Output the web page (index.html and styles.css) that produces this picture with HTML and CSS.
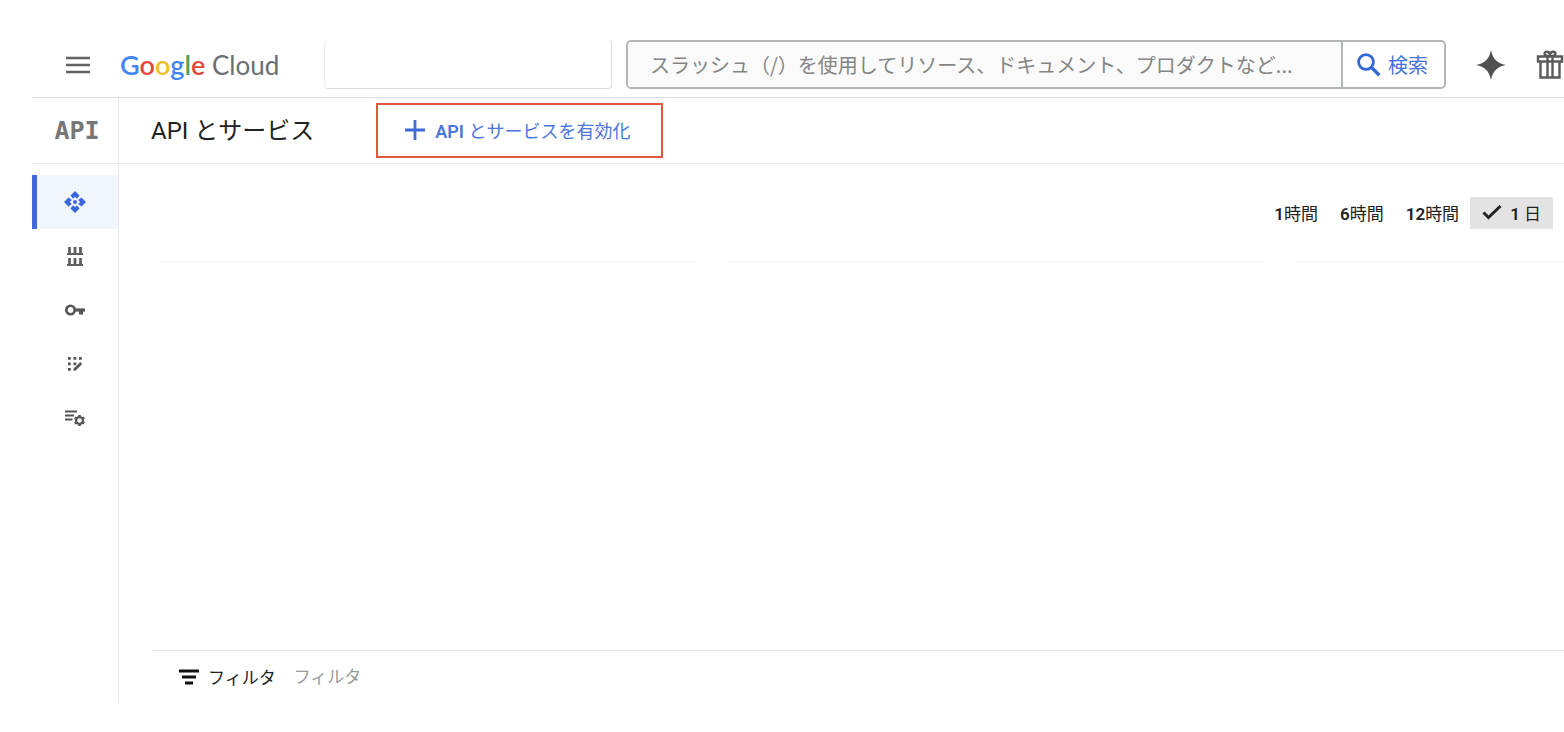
FILE: index.html
```html
<!DOCTYPE html>
<html lang="ja">
<head>
    <meta charset="UTF-8">
    <meta name="viewport" content="width=device-width, initial-scale=1.0">
    <title>API とサービス</title>
    <link rel="stylesheet" href="styles.css">
</head>
<body>
    <header class="top-bar">
        <button class="menu-button" type="button" aria-label="メニュー">
            <svg width="24" height="18" viewBox="0 0 24 18"><path d="M0 2h24M0 9h24M0 16h24" stroke="#626262" stroke-width="2.6"/></svg>
        </button>
        <a class="logo" href="#"><span class="blue">G</span><span class="red">o</span><span class="yellow">o</span><span class="blue">g</span><span class="green">l</span><span class="red">e</span> Cloud</a>
        <button class="project-picker" type="button" aria-label="プロジェクトを選択"></button>
        <form class="search">
            <input class="search-input" type="text" aria-label="検索" placeholder="スラッシュ（/）を使用してリソース、ドキュメント、プロダクトなど...">
            <button class="search-button" type="button">
                <svg width="24" height="24" viewBox="0 0 24 24" fill="none" stroke="#3367d6"><circle cx="9" cy="9" r="7.4" stroke-width="2.8"/><path d="M14.3 14.3l8 8" stroke-width="3.4"/></svg>
                検索
            </button>
        </form>
        <div class="top-actions">
            <button type="button" aria-label="Gemini">
                <svg width="30" height="30" viewBox="0 0 30 30"><path d="M15 0C16.8 9 21 13.2 30 15C21 16.8 16.8 21 15 30C13.2 21 9 16.8 0 15C9 13.2 13.2 9 15 0z" fill="#505050"/></svg>
            </button>
            <button type="button" aria-label="無料トライアル">
                <svg width="28" height="30" viewBox="0 0 28 30" fill="none" stroke="#5a5a5a" stroke-width="2.4"><path d="M2 6.500h24v5H2zM4.500 11.500h19v16h-19zM11.500 6.500v21M16.500 6.500v21M14 6C11 6 8.500 5.500 8.500 3.700C8.500 1 13 1 14 4C15 1 19.500 1 19.500 3.700C19.500 5.500 17 6 14 6z"/></svg>
            </button>
        </div>
    </header>

    <div class="title-bar">
        <div class="product-icon">API</div>
        <h1 class="page-title">API とサービス</h1>
        <button class="enable-button" type="button">
            <svg width="20" height="20" viewBox="0 0 20 20"><path d="M10 0v20M0 10h20" stroke="#3f6bd8" stroke-width="2.8"/></svg>
            <span><b>API</b> とサービスを有効化</span>
        </button>
    </div>

    <div class="layout">
        <nav class="side-nav">
            <a class="active" href="#" aria-label="有効な API とサービス">
                <svg width="22" height="22" viewBox="0 0 22 22" fill="#3b66d8"><circle cx="11" cy="11" r="2"/><path d="M11 0l4.500 4.500-2.500 3.300-2-2-2 2-2.500-3.300zM22 11l-4.500 4.500-3.300-2.500 2-2-2-2 3.300-2.500zM11 22l-4.500-4.500 2.500-3.300 2 2 2-2 2.500 3.300zM0 11l4.500-4.500 3.300 2.500-2 2 2 2-3.300 2.500z"/></svg>
            </a>
            <a href="#" aria-label="ライブラリ">
                <svg width="18" height="20" viewBox="0 0 18 20" fill="none" stroke="#5f5f5f"><path d="M1 8h16M1 19h16" stroke-width="1.800"/><path d="M3.500 1v7M9 1v7M14.500 1v7M3.500 12v7M9 12v7M14.500 12v7" stroke-width="2.800"/></svg>
            </a>
            <a href="#" aria-label="認証情報">
                <svg width="20" height="12" viewBox="0 0 20 12" fill="none" stroke="#555"><circle cx="5.500" cy="6" r="4.200" stroke-width="2.600"/><path d="M9.500 6H20" stroke-width="3.200"/><path d="M16 6v4.500" stroke-width="4"/></svg>
            </a>
            <a href="#" aria-label="OAuth 同意画面">
                <svg width="16" height="16" viewBox="0 0 16 16" fill="#555"><path d="M1 1h2.800v2.800H1zM6.500 1h2.800v2.800H6.500zM12 1h2.800v2.800H12zM1 6.500h2.800v2.800H1zM6.500 6.500h2.800v2.800H6.500zM1 12h2.800v2.800H1zM6.500 12.800L13.300 6l1.900 1.900-6.800 6.800H6.500z"/></svg>
            </a>
            <a href="#" aria-label="ページの使用に関する契約">
                <svg width="22" height="18" viewBox="0 0 22 18" fill="none" stroke="#555"><path d="M1 2.500h12M1 6.500h9M1 10.500h7.500" stroke-width="2"/><circle cx="15.500" cy="11.500" r="3.400" stroke-width="2.200"/><path d="M15.500 6v2M15.500 15v2M10.700 8.700l1.800 1M18.500 13.300l1.800 1M10.700 14.300l1.800-1M18.500 9.700l1.800-1" stroke-width="2.600"/></svg>
            </a>
        </nav>

        <main class="content">
            <div class="time-range">
                <button type="button"><span><b>1</b>時間</span></button>
                <button type="button"><span><b>6</b>時間</span></button>
                <button type="button"><span><b>12</b>時間</span></button>
                <button class="selected" type="button">
                    <svg width="20" height="16" viewBox="0 0 20 16"><path d="M1.500 8.500l5 5L18.500 2" fill="none" stroke="#222" stroke-width="3"/></svg>
                    <span><b>1</b> 日</span>
                </button>
                <button type="button"><span><b>2</b> 日</span></button>
            </div>
            <div class="charts">
                <section class="chart"></section>
                <section class="chart"></section>
                <section class="chart"></section>
            </div>
            <div class="filter-bar">
                <svg width="20" height="16" viewBox="0 0 20 16"><path d="M0 2h20M3 8h14M6 14h8" stroke="#111" stroke-width="2.800"/></svg>
                <label for="filter">フィルタ</label>
                <input id="filter" type="text" placeholder="フィルタ">
            </div>
        </main>
    </div>
</body>
</html>
```
FILE: styles.css
```css
* {
    box-sizing: border-box;
    margin: 0;
    padding: 0;
}

body {
    display: flex;
    flex-direction: column;
    min-height: 100vh;
    padding: 32px 0 30px 32px;
    background: #fff;
    color: #222;
    font-family: Roboto, "Noto Sans CJK JP", sans-serif;
    font-size: 17px;
    overflow: hidden;
}

button,
input {
    border: none;
    background: none;
    color: inherit;
    font: inherit;
}

button {
    cursor: pointer;
    white-space: nowrap;
}

b {
    font-weight: 600;
}

svg {
    display: block;
    flex-shrink: 0;
}

/* Top bar */
.top-bar {
    display: flex;
    align-items: center;
    height: 66px;
    padding-left: 34px;
    border-bottom: 1px solid #dcdcdc;
}

.logo {
    width: 174px;
    margin-left: 30px;
    color: #6a6e73;
    font-family: Lato, sans-serif;
    font-size: 26px;
    text-decoration: none;
    white-space: nowrap;
}

.logo span {
    font-size: 27px;
    font-weight: 600;
}

.blue { color: #4285f4; }
.red { color: #e04a3c; }
.yellow { color: #f5bc2c; }
.green { color: #4aa45c; }

.project-picker {
    width: 288px;
    height: 49px;
    margin-left: 30px;
    border: 1px solid #d8dadc;
    border-top: none;
    border-left-color: #eee;
    border-radius: 4px;
}

.search {
    display: flex;
    flex: 1;
    height: 49px;
    margin-left: 14px;
    border: 2px solid #b4b7ba;
    border-radius: 5px;
    overflow: hidden;
}

.search-input {
    flex: 1;
    min-width: 0;
    padding-left: 22px;
    background: #fafafa;
    font-family: "Noto Sans CJK JP", sans-serif;
    font-size: 20px;
}

.search-input::placeholder {
    color: #858585;
}

.search-button {
    display: flex;
    align-items: center;
    gap: 7px;
    padding: 0 16px 0 14px;
    border-left: 2px solid #b4b7ba;
    color: #4272dc;
    font-size: 20px;
}

.top-actions {
    display: flex;
    align-items: center;
    gap: 30px;
    margin-left: 30px;
}

/* Title bar */
.title-bar {
    display: flex;
    align-items: center;
    height: 66px;
    border-bottom: 1px solid #e8e8e8;
}

.product-icon {
    display: flex;
    align-items: center;
    justify-content: center;
    width: 87px;
    height: 100%;
    padding-left: 4px;
    border-right: 1px solid #e8e8e8;
    color: #777;
    font-family: "DejaVu Sans Mono", monospace;
    font-size: 25px;
    font-weight: 700;
}

.page-title {
    margin-left: 32px;
    padding-bottom: 4px;
    font-size: 24px;
    font-weight: 400;
    white-space: nowrap;
}

.enable-button {
    display: flex;
    align-items: center;
    gap: 10px;
    height: 55px;
    margin-left: 62px;
    padding: 0 30px 2px 27px;
    border: 2px solid #e2583c;
    color: #4a76dd;
    font-size: 18px;
}

/* Side navigation */
.layout {
    display: flex;
    flex: 1;
}

.side-nav {
    width: 87px;
    padding-top: 11px;
    border-right: 1px solid #e8e8e8;
}

.side-nav a {
    display: flex;
    align-items: center;
    justify-content: center;
    height: 54px;
}

.side-nav .active {
    padding-right: 5px;
    border-left: 5px solid #3f67d8;
    background: #f0f5fe;
}

/* Content */
.content {
    display: flex;
    flex: 1;
    flex-direction: column;
    min-width: 0;
    overflow: hidden;
}

/* the range list runs past the right edge */
.time-range {
    display: flex;
    justify-content: flex-end;
    margin: 33px -42px 32px 0;
}

.time-range button {
    display: flex;
    align-items: center;
    gap: 8px;
    height: 32px;
    padding: 0 11px 2px;
}

.time-range .selected {
    padding: 0 12px 2px;
    background: #e3e3e3;
}

.charts {
    display: grid;
    flex: 1;
    grid-template-columns: 2fr 2fr 1fr;
    gap: 32px;
    padding-left: 41px;
}

.chart {
    border-top: 1px solid #f9f9f9;
}

.filter-bar {
    display: flex;
    align-items: center;
    height: 52px;
    margin-left: 33px;
    padding-left: 27px;
    border-top: 1px solid #e8e8e8;
}

.filter-bar label {
    margin-left: 9px;
}

.filter-bar input {
    margin-left: 18px;
}

.filter-bar input::placeholder {
    color: #999;
}
```
